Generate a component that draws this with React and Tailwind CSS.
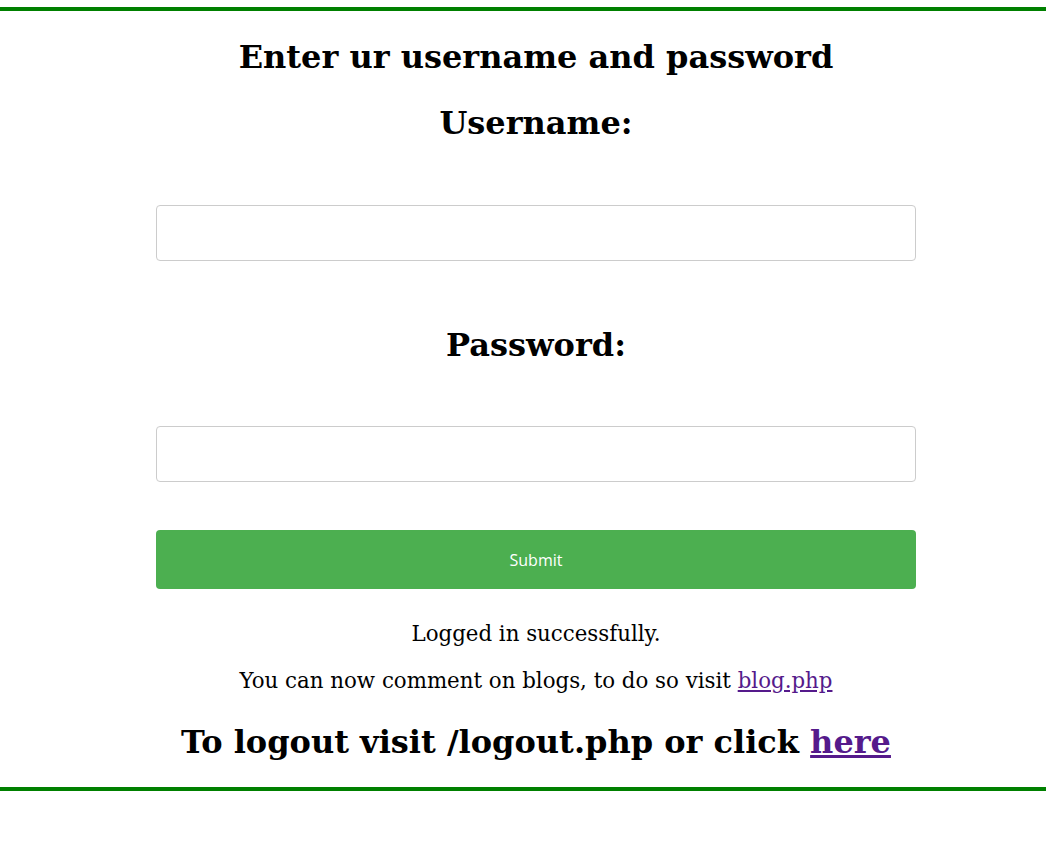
export default function App() {
  return (
    <div className="min-h-screen bg-white text-black font-['DejaVu_Serif',serif]">
      <div className="h-[7px]" />
      <div className="border-y-4 border-[#008000]">
        <div className="ml-[156px] w-[760px] text-center">
          <h1 className="pt-[24px] text-[32px] font-bold leading-[44px]">Enter ur username and password</h1>
          <form>
            <label className="block mt-[22px] text-[32px] font-bold leading-[44px]">Username:</label>
            <input
              type="text"
              className="block mt-[60px] w-full h-[56px] border border-[#ccc] rounded-[4px] px-3"
            />
            <label className="block mt-[62px] text-[32px] font-bold leading-[44px]">Password:</label>
            <input
              type="password"
              className="block mt-[59px] w-full h-[56px] border border-[#ccc] rounded-[4px] px-3"
            />
            <button
              type="button"
              className="block mt-[48px] w-full h-[59px] rounded-[4px] bg-[#4CAF50] text-white text-[16px] font-['Open_Sans',sans-serif]"
            >
              Submit
            </button>
          </form>
          <p className="mt-[30px] text-[21.33px] leading-[30px]">Logged in successfully.</p>
          <p className="mt-[17px] text-[21.33px] leading-[30px]">
            You can now comment on blogs, to do so visit{' '}
            <a href="#" className="text-[#551A8B] underline">blog.php</a>
          </p>
          <h2 className="mt-[24px] pb-[23px] text-[32px] font-bold leading-[44px] whitespace-nowrap">
            To logout visit /logout.php or click{' '}
            <a href="#" className="text-[#551A8B] underline">here</a>
          </h2>
        </div>
      </div>
    </div>
  );
}
